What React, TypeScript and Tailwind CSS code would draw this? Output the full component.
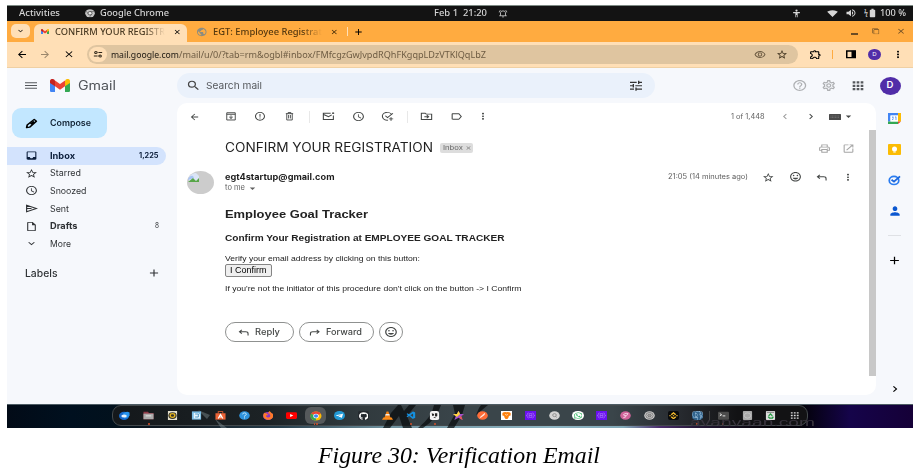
import { useLayoutEffect, useRef } from "react";
import type { ComponentType, ReactNode } from "react";
import clsx from "clsx";
import {
  MdArrowBack, MdArrowForward, MdClose, MdAdd, MdExpandMore, MdMenu, MdSearch, MdTune, MdHelpOutline,
  MdOutlineSettings, MdApps, MdMoreVert, MdChevronLeft, MdChevronRight, MdArrowDropDown, MdOutlinePrint,
  MdOpenInNew, MdStarBorder, MdInsertEmoticon, MdErrorOutline, MdAccessTime, MdLabelOutline,
  MdOutlineInsertDriveFile, MdOutlineExtension, MdSignalWifi4Bar, MdVolumeUp, MdBatteryFull,
  MdPublic, MdInbox, MdPerson, MdOutlineRemoveRedEye, MdFilterNone,
} from "react-icons/md";
import { FaGithub, FaWhatsapp, FaFirefoxBrowser, FaTelegramPlane } from "react-icons/fa";
import { SiBinance, SiPostgresql } from "react-icons/si";
import { VscVscode } from "react-icons/vsc";

/* Text that is stretched horizontally to fill the width of its box. */
function Fit({ children, className }: { children: ReactNode; className: string }) {
  const box = useRef<HTMLDivElement>(null);
  const inner = useRef<HTMLSpanElement>(null);
  useLayoutEffect(() => {
    if (!box.current || !inner.current) return;
    inner.current.style.transform = "none";
    const s = box.current.getBoundingClientRect().width / inner.current.getBoundingClientRect().width;
    inner.current.style.transform = `scaleX(${s})`;
  }, [children]);
  return (
    <div ref={box} className={clsx("shrink-0 whitespace-nowrap", className)}>
      <span ref={inner} className="inline-block origin-left">{children}</span>
    </div>
  );
}

/* Icon drawn in a box of any proportion */
function Ic({ i, w = 12, h = 10.5, className = "" }: { i: ComponentType<any>; w?: number; h?: number; className?: string }) {
  const I = i;
  return (
    <svg width={w} height={h} viewBox="0 0 24 24" preserveAspectRatio="none" className={clsx("shrink-0", className)}>
      <I size={24} width={24} height={24} preserveAspectRatio="none" />
    </svg>
  );
}

function Cell({ className, children }: { className: string; children?: ReactNode }) {
  return <div className={clsx("flex shrink-0 items-center justify-center", className)}>{children}</div>;
}

/* Line icon drawn on a 24-unit grid */
const line = (d: string, sw = 2) => ({ size, ...p }: any) => (
  <svg viewBox="0 0 24 24" fill="none" stroke="currentColor" strokeWidth={sw} {...p}><path d={d} /></svg>
);
const Archive = line("M3.500 4h17v16.500h-17zM3.500 7.500h17M12 10v7M8.500 13.500L12 17l3.500-3.500");
const Trash = line("M4 6h16M9 6V3.500h6V6M6 6v14.500h12V6M10 9v8M14 9v8");
const Unread = line("M16 5H2.500v14.500h18.500V10M3 8l9 5 6-4M20.500 3v4M18.500 5h4");
const TaskAdd = line("M20 9a9 9 0 1 0-7 12M8 11l4 4L22 5M18.500 14v8M14.500 18h8");
const Move = line("M2.500 5h7l2 2h10v12.500h-19zM8 13h7M12.500 9.500l3.500 3.500-3.500 3.500");
const Reply = line("M8 5L3 10l5 5M3 10h13q5 0 5 5v5", 2.3);
const Forward = line("M16 5l5 5-5 5M21 10H8q-5 0-5 5v5", 2.3);
const Send = line("M3 5l18 7-18 7zM3 12h9", 2.2);
const Bell = line("M6 18V10q0-5 6-5t6 5v8M3 18h18M10 21h4M3 9q0-4 3-6M21 9q0-4-3-6");
const Access = ({ size, ...p }: any) => (
  <svg viewBox="0 0 24 24" fill="currentColor" {...p}><circle cx="12" cy="4" r="3" /><path d="M3 8h18v3h-6v11h-2v-6h-2v6H9V11H3z" /></svg>
);
const Site = ({ size, ...p }: any) => (
  <svg viewBox="0 0 24 24" fill="none" stroke="currentColor" strokeWidth="2.6" {...p}><circle cx="7" cy="7" r="3" /><path d="M13 7h9M2 17h9" /><circle cx="17" cy="17" r="3" /></svg>
);
const SidePanel = ({ size, ...p }: any) => (
  <svg viewBox="0 0 24 24" {...p}><path d="M3.500 4.500h17v15h-17z" fill="none" stroke="currentColor" strokeWidth="3" /><path d="M13 4h8v16h-8z" fill="currentColor" /></svg>
);
const Pencil = ({ size, ...p }: any) => (
  <svg viewBox="0 0 24 24" {...p}><path d="M3 21l1-5.500L17 3l4 4L8.500 20z" fill="none" stroke="currentColor" strokeWidth="3" strokeLinejoin="round" /><path d="M9 12l6-6 3.500 3.500-6 6z" fill="currentColor" /></svg>
);
const Keyboard = ({ size, ...p }: any) => (
  <svg viewBox="0 0 24 12" {...p}><rect width="24" height="12" rx="1" fill="#4a4a4a" /><path d="M3 4h18M3 7h18" stroke="#888" strokeDasharray="2 1" /></svg>
);
const GmailLogo = ({ size, ...p }: any) => (
  <svg viewBox="0 0 24 18" {...p}>
    <path d="M0 4v12.500Q0 18 1.500 18H6V7z" fill="#4285f4" /><path d="M24 4v12.500q0 1.500-1.500 1.500H18V7z" fill="#34a853" />
    <path d="M18 2.500V10l6-4.500V3c0-3-3-4-5-2.200z" fill="#fbbc04" /><path d="M6 10V2.200L12 7l6-4.800V10l-6 4.800z" fill="#ea4335" />
    <path d="M0 3v2.500L6 10V2.200L5 .8C3-1 0 0 0 3z" fill="#c5221f" />
  </svg>
);
const ChromeLogo = ({ size, ...p }: any) => (
  <svg viewBox="0 0 24 24" {...p}>
    <circle cx="12" cy="12" r="11" fill="#fbbc05" /><path d="M12 12L2.500 6.500A11 11 0 0 1 21.500 6.500z" fill="#ea4335" />
    <path d="M12 12L2.500 6.500A11 11 0 0 0 12 23z" fill="#34a853" /><circle cx="12" cy="12" r="5.500" fill="#fff" /><circle cx="12" cy="12" r="4.200" fill="#4285f4" />
  </svg>
);
const ChromeGray = ({ size, ...p }: any) => (
  <svg viewBox="0 0 24 24" {...p}>
    <circle cx="12" cy="12" r="11.500" fill="#c4c4c4" /><circle cx="12" cy="12" r="5" fill="#eee" stroke="#444" strokeWidth="2" />
    <path d="M12 7h10M8 14L3 6M16 14l-5 9" stroke="#555" strokeWidth="1.500" />
  </svg>
);

function TopBar() {
  return (
    <div className="flex h-[15.500px] items-center border-t border-[#7d8a84] bg-[#131313] pl-[12px] font-['Noto_Sans',sans-serif] text-[8.500px] font-medium leading-[14px] text-[#d6d6d6]">
      <Fit className="w-[41px]">Activities</Fit>
      <Ic i={ChromeGray} w={10} h={8.5} className="ml-[25px]" />
      <Fit className="ml-[4.500px] w-[69px]">Google Chrome</Fit>
      <Fit className="ml-[265.500px] w-[53px]">Feb 1&nbsp; 21:20</Fit>
      <Ic i={Bell} w={10} h={9} className="ml-[11px]" />
      <Ic i={Access} w={9} h={9} className="ml-[284px]" />
      <Ic i={MdSignalWifi4Bar} w={11} h={9} className="ml-[26px]" />
      <Ic i={MdVolumeUp} w={12} h={10} className="ml-[7px]" />
      <span className="ml-[7px] text-[7px]">ϟ</span>
      <Ic i={MdBatteryFull} w={13} h={10} className="-ml-[2px]" />
      <Fit className="ml-[1px] w-[26px]">100 %</Fit>
    </div>
  );
}

function TabStrip() {
  return (
    <div className="flex h-[21.500px] items-end bg-[#ffab40] pl-[4px] font-['Noto_Sans',sans-serif] text-[8.500px] font-medium leading-[12px] text-[#4a3a22]">
      <Cell className="mb-[4px] h-[14px] w-[18.500px] rounded-[5px] bg-[#ffdfb6]"><Ic i={MdExpandMore} w={9} h={8} className="text-black" /></Cell>
      <div className="ml-[4.500px] flex h-[18px] w-[153px] items-center rounded-t-[6px] bg-[#ffdfb6] pb-[3px] pl-[7px]">
        <Ic i={GmailLogo} w={8} h={5.5} />
        <Fit className="ml-[6px] w-[110px] [mask-image:linear-gradient(90deg,#000_82%,transparent)]">CONFIRM YOUR REGISTR</Fit>
        <Ic i={MdClose} w={8.5} h={8} className="ml-[8px] text-black" />
      </div>
      <div className="flex h-[18px] items-center pb-[3px] pl-[9px]">
        <Ic i={MdPublic} w={11.5} h={10} className="text-[#8c8c80]" />
        <Fit className="ml-[5px] w-[109px] text-[#54380f] [mask-image:linear-gradient(90deg,#000_82%,transparent)]">EGT: Employee Registrat</Fit>
        <Ic i={MdClose} w={8.5} h={8} className="ml-[8.500px] text-[#3c2705]" />
        <div className="ml-[8px] h-[9px] w-px bg-[#ffdfb6]" />
        <Ic i={MdAdd} w={11} h={10} className="ml-[5.500px] text-black" />
      </div>
      <div className="ml-auto flex h-[18px] items-center pb-[3px] pr-[7px] text-[#6b4c24]">
        <div className="mt-[5px] h-[1.500px] w-[7px] bg-[#6b4c24]" />
        <Ic i={MdFilterNone} w={7.5} h={6.5} className="ml-[14px] -scale-y-100" />
        <Ic i={MdClose} w={10} h={8.5} className="ml-[16.500px]" />
      </div>
    </div>
  );
}

function AddressBar() {
  return (
    <div className="flex h-[26px] items-center border-b border-[#efd0a4] bg-[#ffdfb6] pl-[3px] font-['Noto_Sans',sans-serif]">
      <Cell className="w-[23px]"><Ic i={MdArrowBack} w={12} h={11} /></Cell>
      <Cell className="w-[24px] text-[#9b876c]"><Ic i={MdArrowForward} w={12} h={11} /></Cell>
      <Cell className="w-[24px]"><Ic i={MdClose} w={12} h={10.5} /></Cell>
      <div className="ml-[6px] flex h-[19px] w-[711px] items-center rounded-full bg-[#dfc5a0] pl-[2px] text-[8.500px] leading-[14px] text-[#6e5c43]">
        <Cell className="h-[15px] w-[18px] rounded-full bg-[#ffdfb6] text-[#2d2416]"><Ic i={Site} w={10} h={8.5} /></Cell>
        <Fit className="ml-[4px] w-[68px] text-[#1c1710]">mail.google.com</Fit>
        <Fit className="w-[307px]">/mail/u/0/?tab=rm&amp;ogbl#inbox/FMfcgzGwJvpdRQhFKgqpLDzVTKlQqLbZ</Fit>
        <Ic i={MdOutlineRemoveRedEye} w={12} h={11} className="ml-[268px]" />
        <Ic i={MdStarBorder} w={12} h={11} className="ml-[10px] text-[#40331f]" />
      </div>
      <Ic i={MdOutlineExtension} w={13} h={11} className="ml-[10.500px]" />
      <div className="ml-[10px] h-[9px] w-[1.500px] bg-[#ffab40]" />
      <Ic i={SidePanel} w={12} h={10.5} className="ml-[12px]" />
      <Cell className="ml-[11px] h-[11.500px] w-[13px] rounded-[50%] bg-[#512da8] text-[6px] text-white">D</Cell>
      <Ic i={MdMoreVert} w={12} h={11} className="ml-[11px]" />
    </div>
  );
}

function GmailHeader() {
  return (
    <div className="flex h-[35px] shrink-0 items-center pl-[16px] text-[#55585c]">
      <Ic i={MdMenu} w={16} h={13} />
      <Ic i={GmailLogo} w={20} h={13} className="ml-[11px]" />
      <Fit className="ml-[7.500px] w-[38px] text-[12.500px] leading-[18px] text-[#505459]">Gmail</Fit>
      <div className="ml-[61.500px] flex h-[25.500px] w-[477.500px] items-center rounded-full bg-[#eaf1fb] pl-[8.500px]">
        <Ic i={MdSearch} w={15} h={13} className="text-[#444]" />
        <Fit className="ml-[5.500px] w-[56px] text-[9.500px] leading-[14px]">Search mail</Fit>
        <Ic i={MdTune} w={16} h={13.5} className="ml-[366px] text-[#333]" />
      </div>
      <Cell className="ml-[131px] w-[29px] text-[#aeb0b3]"><Ic i={MdHelpOutline} w={15.5} h={13} /></Cell>
      <Cell className="w-[29px] text-[#aeb0b3]"><Ic i={MdOutlineSettings} w={15.5} h={13} /></Cell>
      <Cell className="w-[29px]"><Ic i={MdApps} w={16} h={13.5} /></Cell>
      <Cell className="ml-[7px] h-[18px] w-[21px] rounded-[50%] bg-[#512da8] text-[9.500px] font-semibold text-white">D</Cell>
    </div>
  );
}

const folders = [
  { icon: MdInbox, name: "Inbox", w: "w-[25px]", count: "1,225", cw: "w-[19.500px]", bold: true, active: true },
  { icon: MdStarBorder, name: "Starred", w: "w-[31px]" },
  { icon: MdAccessTime, name: "Snoozed", w: "w-[36.500px]" },
  { icon: Send, name: "Sent", w: "w-[19px]" },
  { icon: MdOutlineInsertDriveFile, name: "Drafts", w: "w-[27.500px]", count: "8", cw: "w-[4px]", bold: true },
  { icon: MdExpandMore, name: "More", w: "w-[21px]" },
];

function Sidebar() {
  return (
    <div className="w-[170px] shrink-0 text-[8.800px] leading-[12px] text-[#303336]">
      <div className="ml-[5px] mt-[5px] flex h-[30px] w-[94.500px] items-center rounded-[9px] bg-[#c2e7ff] pl-[12.500px] text-[8.500px] font-semibold text-[#123]">
        <Ic i={Pencil} w={13} h={11} className="text-black" />
        <Fit className="ml-[12px] w-[41px]">Compose</Fit>
      </div>
      <div className="mt-[9px]">
        {folders.map((f) => (
          <div key={f.name} className={clsx("flex h-[17.600px] w-[159px] items-center rounded-r-full pl-[17.500px]", f.active && "bg-[#d3e3fd] text-[#0b1d3a]", f.bold && "font-bold")}>
            <Ic i={f.icon} w={13} h={11} />
            <Fit className={clsx("ml-[12px]", f.w)}>{f.name}</Fit>
            {f.count && <Fit className={clsx("ml-auto mr-[7.500px] text-[7px]", f.cw, !f.active && "font-normal")}>{f.count}</Fit>}
          </div>
        ))}
      </div>
      <div className="mt-[12px] flex items-center pl-[17.500px] text-[10px] font-medium leading-[16px]">
        <Fit className="w-[32.500px]">Labels</Fit>
        <Ic i={MdAdd} w={14} h={12} className="ml-[90px]" />
      </div>
    </div>
  );
}

function MailToolbar() {
  const c = "w-[29.300px]";
  const sep = <Cell className="w-[10px]"><div className="h-[12px] w-px bg-[#e8e8e8]" /></Cell>;
  return (
    <div className="flex h-[27px] items-center pl-[2.500px] text-[#444746]">
      <Cell className={c}><Ic i={MdArrowBack} w={11} h={10} /></Cell>
      <Cell className="ml-[7.500px] w-[29.300px]"><Ic i={Archive} w={12} h={10.5} /></Cell>
      <Cell className={c}><Ic i={MdErrorOutline} w={12} h={10.5} /></Cell>
      <Cell className={c}><Ic i={Trash} w={11} h={10.5} /></Cell>
      {sep}
      <Cell className={c}><Ic i={Unread} w={13} h={10.5} /></Cell>
      <Cell className={c}><Ic i={MdAccessTime} w={13} h={11} /></Cell>
      <Cell className={c}><Ic i={TaskAdd} w={13} h={10.5} /></Cell>
      {sep}
      <Cell className={c}><Ic i={Move} w={13} h={10.5} /></Cell>
      <Cell className={c}><Ic i={MdLabelOutline} w={13} h={11} /></Cell>
      <Cell className="w-[25px]"><Ic i={MdMoreVert} w={12} h={10.5} /></Cell>
      <Fit className="ml-[235px] w-[33.500px] text-[7px] leading-[10px] text-[#5e5e5e]">1 of 1,448</Fit>
      <Ic i={MdChevronLeft} w={12} h={11} className="ml-[14.500px] text-[#999]" />
      <Ic i={MdChevronRight} w={12} h={11} className="ml-[14px]" />
      <Ic i={Keyboard} w={12} h={6} className="ml-[12.500px]" />
      <Ic i={MdArrowDropDown} w={13} h={11} className="ml-[0.500px]" />
    </div>
  );
}

function BrokenAvatar() {
  return (
    <svg viewBox="0 0 27 23" width="27" height="23" preserveAspectRatio="none" className="shrink-0">
      <ellipse cx="13.500" cy="11.500" rx="13.500" ry="11.500" fill="#ccc" />
      <path d="M2 6Q5 2 9 2l3 3v6H2z" fill="#dbe5f6" /><path d="M1.500 7Q4 4 6 5l1 2-6 2z" fill="#a9c4f4" />
      <path d="M1 11l5-4 3 3 3-3v4z" fill="#58a648" />
    </svg>
  );
}

function Message() {
  return (
    <div className="flex w-[692px] flex-col">
      <div className="flex h-[36px] items-center pl-[48px]">
        <Fit className="w-[208px] text-[12.500px] leading-[18px] text-[#1f1f1f]">CONFIRM YOUR REGISTRATION</Fit>
        <div className="ml-[7px] flex h-[10px] w-[33px] items-center rounded-[2px] bg-[#ddd] pl-[2.500px] text-[6.500px] leading-[9px] text-[#666]">
          <Fit className="w-[20px]">Inbox</Fit><Ic i={MdClose} w={7} h={6} className="ml-[2px]" />
        </div>
        <Ic i={MdOutlinePrint} w={13} h={11} className="ml-[344.500px] text-[#a5a5a5]" />
        <Ic i={MdOpenInNew} w={13} h={11} className="ml-[11px] text-[#a5a5a5]" />
      </div>
      <div className="mt-[4.500px] flex h-[24px] pl-[10px]">
        <BrokenAvatar />
        <div className="ml-[11px] w-[110px]">
          <Fit className="w-[109.500px] text-[8.500px] font-bold leading-[12px] text-[#1f1f1f]">egt4startup@gmail.com</Fit>
          <div className="flex items-center text-[7.500px] leading-[10px] text-[#5e5e5e]"><Fit className="w-[20px]">to me</Fit><Ic i={MdArrowDropDown} w={13} h={11} className="ml-[0.500px]" /></div>
        </div>
        <div className="ml-[333px] flex h-[13px] items-center text-[#444746]">
          <Fit className="w-[80px] text-[7px] leading-[10px] text-[#5e5e5e]">21:05 (14 minutes ago)</Fit>
          <Ic i={MdStarBorder} w={12.5} h={11} className="ml-[14px]" />
          <Ic i={MdInsertEmoticon} w={13} h={11.5} className="ml-[14px]" />
          <Ic i={Reply} w={11.5} h={9} className="ml-[14.500px]" />
          <Ic i={MdMoreVert} w={12} h={10.5} className="ml-[14.500px]" />
        </div>
      </div>
      <div className="flex flex-col items-start pl-[48px] font-['Liberation_Sans',sans-serif] text-[#222]">
        <Fit className="mt-[11px] w-[143px] text-[11.700px] font-bold leading-[16px]">Employee Goal Tracker</Fit>
        <Fit className="mt-[10.500px] w-[279.500px] text-[9px] font-bold leading-[12px]">Confirm Your Registration at EMPLOYEE GOAL TRACKER</Fit>
        <Fit className="mt-[9.500px] w-[195px] text-[7.800px] leading-[10px]">Verify your email address by clicking on this button:</Fit>
        <div className="-ml-[0.500px] flex h-[13px] w-[47.500px] items-center rounded-[2px] border border-[#858585] bg-[#efefef] pl-[4.500px] text-[8.300px] leading-[11px] text-black"><Fit className="w-[36.500px]">I Confirm</Fit></div>
        <Fit className="mt-[7px] w-[296.500px] text-[7.800px] leading-[10px]">If you're not the initiator of this procedure don't click on the button -&gt; I Confirm</Fit>
      </div>
      <div className="mt-[28.500px] flex pl-[47.500px] text-[9px] font-medium leading-[12px] text-[#444746]">
        <div className="flex h-[20px] w-[69.500px] items-center rounded-full border border-[#8f9190] pl-[12.500px]"><Ic i={Reply} w={11.5} h={9} /><Fit className="ml-[5.500px] w-[25px]">Reply</Fit></div>
        <div className="ml-[5px] flex h-[20px] w-[74.500px] items-center rounded-full border border-[#8f9190] pl-[8.500px]"><Ic i={Forward} w={11.5} h={9} /><Fit className="ml-[6px] w-[36px]">Forward</Fit></div>
        <Cell className="ml-[5px] h-[20px] w-[24.500px] rounded-full border border-[#8f9190]"><Ic i={MdInsertEmoticon} w={14} h={12} /></Cell>
      </div>
    </div>
  );
}

const Calendar = ({ size, ...p }: any) => (
  <svg viewBox="0 0 26 22" {...p}><path d="M0 0h20v5H0z" fill="#4285f4" /><path d="M0 3h5v14H0z" fill="#4285f4" /><path d="M20 0h6v17h-6z" fill="#fbbc04" /><path d="M0 17h20v5H0z" fill="#34a853" /><path d="M20 17h6l-6 5z" fill="#ea4335" /><path d="M5 5h15v12H5z" fill="#fff" /><path d="M8 8h3l-2 2q3 1 1 3H8M14 8.500l2-1V14" fill="none" stroke="#4285f4" strokeWidth="1.500" /></svg>
);
const Keep = ({ size, ...p }: any) => (
  <svg viewBox="0 0 26 22" {...p}><rect width="26" height="22" rx="2" fill="#fbbc04" /><circle cx="13" cy="10" r="5" fill="#fff" /><path d="M10.500 15h5v2h-5z" fill="#fff" /></svg>
);
const Tasks = ({ size, ...p }: any) => (
  <svg viewBox="0 0 26 22" fill="none" {...p}><ellipse cx="12" cy="11.500" rx="9.500" ry="8.500" stroke="#2a7cf0" strokeWidth="3.500" /><path d="M7 10l5 4L24 3" stroke="#1a66dd" strokeWidth="3.500" /></svg>
);

function SidePanelApps() {
  return (
    <div className="flex w-[37px] flex-col items-center">
      <Cell className="h-[31px]"><Ic i={Calendar} w={13} h={11} /></Cell>
      <Cell className="h-[31px]"><Ic i={Keep} w={13} h={11} /></Cell>
      <Cell className="h-[31px]"><Ic i={Tasks} w={13} h={10.5} /></Cell>
      <Cell className="h-[30px]"><Ic i={MdPerson} w={14} h={14} className="text-[#0b57d0]" /></Cell>
      <div className="mt-[9px] h-px w-[13px] bg-[#dfe1e5]" />
      <Ic i={MdAdd} w={15} h={13} className="mt-[18px] text-black" />
      <Ic i={MdChevronRight} w={14} h={12} className="mb-[9px] mt-auto" />
    </div>
  );
}

function Art({ children, box = "0 0 24 24" }: { children: ReactNode; box?: string }) {
  return <svg width="11" height="9" viewBox={box} preserveAspectRatio="none">{children}</svg>;
}
const purple = <Art><path d="M0 0h24v24H0z" fill="#6a10f0" /><path d="M8 5Q5 5 5 9t-2 3q2 0 2 3t3 4M16 5q3 0 3 4t2 3q-2 0-2 3t-3 4M9 7h6v10H9zM9 12h6" fill="none" stroke="#b384f8" strokeWidth="1.500" /></Art>;

const dock: { art: ReactNode; dot?: number; lit?: boolean; gap?: boolean }[] = [
  { art: <Art><circle cx="11" cy="13" r="11" fill="#1668c9" /><path d="M9 6Q17-1 23 4v8q-4 8-12 8z" fill="#2694ef" /><ellipse cx="11" cy="13" rx="6" ry="4" fill="#e8f2fb" /></Art> },
  { art: <Art><path d="M1 2h10l2 3h10v17H1z" fill="#8e3947" /><path d="M1 7h22v15H1z" fill="#aaa" /><path d="M6 13h12" stroke="#eee" strokeWidth="2" /></Art>, dot: 1 },
  { art: <Art><path d="M2 0h20v24H2z" fill="#e6e1cc" /><circle cx="12" cy="12" r="9" fill="#34332d" /><circle cx="12" cy="12" r="5" fill="none" stroke="#e5b520" strokeWidth="3" /></Art> },
  { art: <Art><path d="M2 1h20v22H2z" fill="#7bbde5" /><path d="M6 5h10l4 5v10H6z" fill="#e7f5fd" /><path d="M9 8h7v8H9" fill="none" stroke="#3987b8" strokeWidth="2" /></Art> },
  { art: <Art><path d="M1 6h22v17H1z" fill="#ed6336" /><path d="M7 7V1h10v6" fill="none" stroke="#ed6336" strokeWidth="2" /><path d="M7 20l5-11 5 11M8 16h8" fill="none" stroke="#fff" strokeWidth="2.500" /></Art> },
  { art: <Art><circle cx="12" cy="12" r="11.500" fill="#2e93de" /><path d="M8 9q0-4 4-4t4 4q0 2-4 4v2M12 17v3" fill="none" stroke="#d8f1ff" strokeWidth="2" /></Art> },
  { art: <Cell className="h-[8px] w-[9.500px] rounded-[50%] bg-[#8b35c8]"><Ic i={FaFirefoxBrowser} w={10.5} h={9} className="text-[#ff7a28]" /></Cell> },
  { art: <Art><rect y="3" width="24" height="18" rx="3" fill="#f00" /><path d="M9 8l7 4-7 4z" fill="#fff" /></Art> },
  { art: <Ic i={ChromeLogo} w={12} h={10} />, lit: true, dot: 2 },
  { art: <Cell className="h-[9px] w-[10.500px] rounded-[50%] bg-[#2299d5]"><Ic i={FaTelegramPlane} w={7} h={5.5} className="text-white" /></Cell> },
  { art: <Cell className="h-[9px] w-[11px] rounded-[2px] bg-[#24292e]"><Ic i={FaGithub} w={9.5} h={8} className="text-white" /></Cell> },
  { art: <Art><path d="M10 1h4l5 18H5z" fill="#f58216" /><path d="M8 8h8l1 4H7z" fill="#eee" /><path d="M3 17h18l3 6H0z" fill="#ff8d18" /></Art> },
  { art: <Ic i={VscVscode} w={10.5} h={9} className="text-[#1490e0]" />, dot: 1 },
  { art: <Art><rect x="2" width="20" height="24" rx="5" fill="#f3f3f3" /><path d="M6 6l5 2v4l-4 1zM13 6h5v7q-3 3-5 0zM9 16h5v3" fill="#242424" /></Art>, dot: 1 },
  { art: <Art><path d="M12 0l3.500 8H24l-6 6 3 10-9-6-9 6 3-10-6-6h8.500z" fill="#a352cf" /><path d="M12 0l3.500 8-7 8L0 8h8.500z" fill="#ffd23c" /><path d="M24 8l-6 6 3 10-8-6z" fill="#f4594b" /></Art> },
  { art: <Art><circle cx="12" cy="12" r="11.500" fill="#ff6c37" /><path d="M6 18L17 6M8 17l9-8" stroke="#fff" strokeWidth="2" /></Art> },
  { art: <Art><path d="M0 0h24v24H0z" fill="#fff" /><path d="M3 5q3-3 9-2 6-1 9 2v7l-4 1v3l-3 5h-4l-3-5v-3l-4-1z" fill="#ff820e" /><path d="M9 9l3 2 3-2" fill="none" stroke="#fff" strokeWidth="1.500" /></Art> },
  { art: purple },
  { art: <Art><circle cx="12" cy="12" r="11.500" fill="#d4d4d4" /><circle cx="12" cy="11" r="4" fill="none" stroke="#888" strokeWidth="2" /><path d="M14 14l3 3" stroke="#888" strokeWidth="2" /></Art> },
  { art: <Cell className="h-[9.500px] w-[11.500px] rounded-[50%] bg-white"><Ic i={FaWhatsapp} w={8.5} h={7} className="text-[#25b35a]" /></Cell> },
  { art: purple },
  { art: <Art><circle cx="12" cy="12" r="11.500" fill="#cf649a" /><path d="M18 7q-5-2-9 1t2 5-4 5M10 13q8-1 7-6" fill="none" stroke="#f5d6e6" strokeWidth="2" /></Art> },
  { art: <Art><circle cx="12" cy="12" r="11.500" fill="#ccc" /><circle cx="12" cy="12" r="8" fill="none" stroke="#555" strokeWidth="1.500" /><circle cx="12" cy="12" r="4" fill="#999" stroke="#444" /></Art> },
  { art: <Cell className="h-[9.500px] w-[10.500px] rounded-[2px] bg-[#090a0c]"><Ic i={SiBinance} w={9} h={7.5} className="text-[#f3ba2f]" /></Cell> },
  { art: <Cell className="h-[9.500px] w-[11px] rounded-[40%] bg-[#32648d]"><Ic i={SiPostgresql} w={11} h={9.5} className="text-[#bcdcf3]" /></Cell>, dot: 1 },
  { art: <Art><rect y="2" width="24" height="21" rx="2" fill="#4c4c4c" /><path d="M4 7l4 3-4 3M10 13h6" fill="none" stroke="#fff" strokeWidth="2" /></Art>, dot: 1, gap: true },
  { art: <Art><rect x="2" width="20" height="24" rx="2" fill="#aaa" /><circle cx="12" cy="12" r="7" fill="none" stroke="#c9c9c9" strokeWidth="2" /></Art> },
  { art: <Art><rect x="2" width="20" height="24" rx="2" fill="#ddd" /><path d="M4 2h16v3H4z" fill="#888" /><path d="M8 13l4-5 4 5M7 15l3 4h6l2-4" fill="none" stroke="#259b43" strokeWidth="3" /></Art> },
  { art: <Art><path d="M4 5h17M4 12h17M4 19h17" stroke="#ddd" strokeWidth="3.500" strokeDasharray="4 2.500" /></Art> },
];

function Dock() {
  return (
    <div className="relative flex h-[24px] items-start overflow-hidden border-t border-[#4d5c64] bg-[linear-gradient(90deg,#020b17_0,#00101f_7%,#02111d_12%,#101820_18%,#263d4b_30%,#6f919e_42%,#8db4c2_60%,#81a9b8_68%,#4b2d6d_72%,#261938_76%,#050408_84%,#04020c_88%,#15044a_93%,#150037_100%)] pl-[105px]">
      <div className="relative flex h-[21px] w-[696px] items-center rounded-[9px] border border-[#43494c] bg-[linear-gradient(90deg,#14181b_0,#1c2225_22%,#30393d_35%,#3a454a_50%,#3a454a_72%,#26292e_82%,#121214_90%)]">
        <svg className="absolute -left-[106px] -top-px" width="906" height="24">
          <path d="M391 0l-7 8-8 15h7l9-12 4 12h9l-5-12 9-11h-7l-5 6-3-6zM427 0q-2 12-16 23h5q14-9 18-23zM446 0h12l-3 10-8 13h-7l8-14zM474 0h7l-12 10 3-7z" fill="#070a0b" opacity=".7" />
          <path d="M191 5l12 5-3 4zM208 14l12 9h-6z" fill="#8b9b9f" opacity=".4" />
        </svg>
        {dock.map((d, n) => (
          <Cell key={n} className={clsx("relative h-[20px]", d.gap ? "w-[26px] pl-[2px]" : "w-[23.850px]")}>
            {d.gap && <div className="absolute left-0 h-[9px] w-px bg-[#444]" />}
            {d.lit && <div className="absolute h-[17px] w-[21px] rounded-[6px] bg-[#55595b]" />}
            <div className="relative">{d.art}</div>
            {d.dot && <div className="absolute bottom-[1px] flex gap-[1px]">{Array.from({ length: d.dot }, (_, k) => <div key={k} className="size-[1.500px] rounded-full bg-[#d4512a]" />)}</div>}
          </Cell>
        ))}
      </div>
      <Fit className="absolute left-[683px] top-[12px] h-[11px] w-[125px] font-['Liberation_Sans',sans-serif] text-[11px] leading-[11px] text-[#39343e]">avanvaan.com</Fit>
    </div>
  );
}

export default function App() {
  return (
    <div className="h-[471px] w-[920px] overflow-hidden bg-white pl-[7px] pt-[5px] font-['Inter',sans-serif]">
      <div className="flex h-[423px] w-[906px] flex-col overflow-hidden bg-[#f6f8fc]">
        <TopBar />
        <TabStrip />
        <AddressBar />
        <GmailHeader />
        <div className="flex flex-1">
          <Sidebar />
          <div className="mb-[9px] flex w-[699px] flex-col rounded-[10px] bg-white">
            <MailToolbar />
            <div className="flex flex-1 justify-between">
              <Message />
              <div className="h-[246px] w-[7px] bg-[#c8c8c8]" />
            </div>
          </div>
          <SidePanelApps />
        </div>
        <Dock />
      </div>
      <Fit className="ml-[311px] mt-[13px] w-[282px] font-['Liberation_Serif',serif] text-[23.500px] italic leading-[28px] text-black">Figure 30: Verification Email</Fit>
    </div>
  );
}
